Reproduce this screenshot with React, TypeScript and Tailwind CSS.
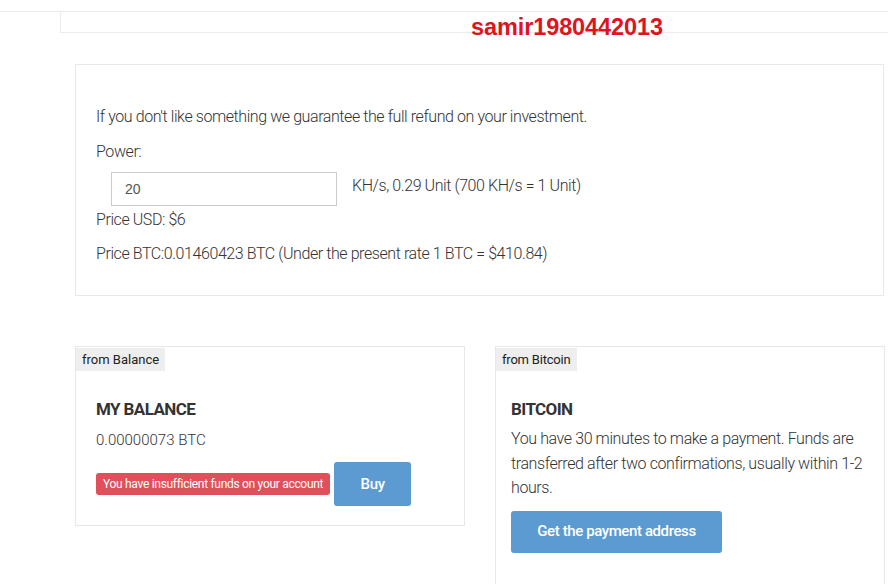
export default function App() {
  return (
    <div
      className="relative h-[584px] w-[888px] overflow-hidden bg-white text-[#333]"
      style={{ fontFamily: "Roboto, 'Open Sans', sans-serif" }}
    >
      {/* Top strip */}
      <div className="mt-[11px] border-t border-[#ececec]">
        <div className="ml-[60px] h-[21px] border-b border-l border-[#ececec]" />
      </div>
      <div
        className="absolute left-[471px] top-[12px] text-[23.5px] font-bold leading-[30px] tracking-[-0.1px] text-[#e0141e]"
        style={{ fontFamily: "'Liberation Sans', Arial, sans-serif" }}
      >
        samir1980442013
      </div>

      {/* Power panel */}
      <div className="ml-[75px] mr-[4px] mt-[31px] h-[232px] border border-[#e8e8e8] pl-[20px] pt-[42px] text-[16px] font-light leading-[20px] tracking-[-0.42px]">
        <p>If you don't like something we guarantee the full refund on your investment.</p>
        <p className="mt-[15px]">Power:</p>
        <div className="mt-[10px] flex items-center">
          <div
            className="ml-[15px] flex h-[34px] w-[226px] items-center border border-[#ccc] pl-[13px] text-[14px] font-normal tracking-normal text-[#555]"
            style={{ fontFamily: "'Liberation Sans', Arial, sans-serif" }}
          >
            20
          </div>
          <span className="ml-[15px] pb-[6px]">KH/s, 0.29 Unit (700 KH/s = 1 Unit)</span>
        </div>
        <p className="mt-[4px]">Price USD: $6</p>
        <p className="mt-[14px]">Price BTC:0.01460423 BTC (Under the present rate 1 BTC = $410.84)</p>
      </div>

      {/* Payment cards */}
      <div className="ml-[75px] mt-[50px] flex items-start gap-[30px]">
        <div className="h-[180px] w-[390px] border border-[#e8e8e8]">
          <span className="inline-block bg-[#eeeeee] px-[6px] text-[13px] leading-[23px] text-[#222]">
            from Balance
          </span>
          <div className="pl-[20px] pt-[26px]">
            <h3 className="text-[17px] font-bold leading-[24px] tracking-[-0.6px] text-[#333]">MY BALANCE</h3>
            <p className="mt-[9px] text-[15px] font-light leading-[20px]">0.00000073 BTC</p>
            <div className="mt-[12px] flex items-start gap-[4px]">
              <span className="mt-[11px] rounded-[3px] bg-[#e0505a] px-[7px] text-[12px] leading-[22px] tracking-[-0.3px] text-white">
                You have insufficient funds on your account
              </span>
              <button className="h-[44px] w-[77px] rounded-[3px] bg-[#5b9bd1] text-[15px] font-medium tracking-[-0.3px] text-white">
                Buy
              </button>
            </div>
          </div>
        </div>

        <div className="h-[260px] w-[390px] border border-[#e8e8e8]">
          <span className="inline-block bg-[#eeeeee] px-[6px] text-[13px] leading-[23px] tracking-[-0.2px] text-[#222]">
            from Bitcoin
          </span>
          <div className="pl-[15px] pr-[10px] pt-[26px]">
            <h3 className="text-[17px] font-bold leading-[24px] tracking-[-0.6px] text-[#333]">BITCOIN</h3>
            <p className="mt-[6px] text-[16px] font-light leading-[24.5px] tracking-[-0.4px]">
              You have 30 minutes to make a payment. Funds are transferred after two confirmations, usually within 1-2
              hours.
            </p>
            <button className="mt-[10px] h-[42px] w-[211px] rounded-[3px] bg-[#5b9bd1] text-[15px] font-medium tracking-[-0.4px] text-white">
              Get the payment address
            </button>
          </div>
        </div>
      </div>
    </div>
  );
}
